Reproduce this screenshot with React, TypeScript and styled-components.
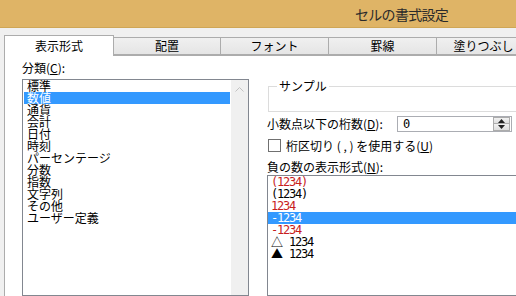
import React from 'react';
import styled, { createGlobalStyle } from 'styled-components';

const GlobalStyle = createGlobalStyle`
    html, body {
        margin: 0;
        padding: 0;
        background: #f0f0f0;
        overflow: hidden;
    }
    body {
        font-family: "Noto Sans CJK JP", "Liberation Sans", sans-serif;
        font-size: 12px;
        color: #000;
    }
`;

const Dialog = styled.div`
    width: 516px;
    height: 296px;
    overflow: hidden;
    display: flex;
    flex-direction: column;
    background: #f0f0f0;
`;

const TitleBar = styled.div`
    height: 28px;
    flex: none;
    box-sizing: border-box;
    display: flex;
    align-items: center;
    padding-left: 355px;
    background: #dfb466;
    border-bottom: 1px solid #cfa656;
    color: #2a2a2a;
    font-size: 14px;
    letter-spacing: -0.7px;
    white-space: nowrap;
`;

const TabRow = styled.div`
    height: 20px;
    flex: none;
    margin-top: 7px;
    padding-left: 4px;
    display: flex;
    align-items: flex-end;
    position: relative;
    z-index: 1;
`;

const Tab = styled.div<{ $active?: boolean; $w: number }>`
    flex: none;
    box-sizing: border-box;
    width: ${p => p.$w}px;
    height: ${p => (p.$active ? 21 : 18)}px;
    margin-bottom: ${p => (p.$active ? -1 : 0)}px;
    margin-left: -1px;
    &:first-child { margin-left: 0; }
    display: flex;
    align-items: center;
    justify-content: center;
    border: 1px solid #acacac;
    border-bottom: ${p => (p.$active ? 'none' : '1px solid #acacac')};
    background: ${p => (p.$active ? '#fff' : 'linear-gradient(#f0f0f0, #e5e5e5)')};
    line-height: 14px;
    white-space: nowrap;
    position: relative;
    z-index: ${p => (p.$active ? 2 : 1)};
`;

const Panel = styled.div`
    flex: 1;
    margin-left: 4px;
    background: #fff;
    border-top: 1px solid #acacac;
    border-left: 1px solid #acacac;
    display: flex;
    padding: 5px 0 0 17px;
    overflow: hidden;
`;

const LeftCol = styled.div`
    width: 227px;
    flex: none;
    display: flex;
    flex-direction: column;
`;

const RightCol = styled.div`
    width: 262px;
    flex: none;
    margin-left: 18px;
    display: flex;
    flex-direction: column;
`;

const Label = styled.div`
    line-height: 14px;
    height: 14px;
    white-space: nowrap;
`;

const U = styled.span`
    text-decoration: underline;
`;

const CategoryList = styled.div`
    margin-top: 4px;
    height: 230px;
    box-sizing: border-box;
    border: 1px solid #828790;
    display: flex;
`;

const Items = styled.div`
    flex: 1;
    padding: 0 1px;
`;

const Item = styled.div<{ $selected?: boolean }>`
    height: 12px;
    line-height: 12px;
    padding-left: 3px;
    white-space: nowrap;
    background: ${p => (p.$selected ? '#3399ff' : 'transparent')};
    color: ${p => (p.$selected ? '#fff' : '#000')};
`;

const ScrollTrack = styled.div`
    width: 17px;
    flex: none;
    background: #f0f0f0;
    display: flex;
    justify-content: center;
    padding-top: 7px;
    box-sizing: border-box;
`;

const Group = styled.fieldset`
    margin: 18px 0 0 1px;
    padding: 0;
    height: 35px;
    box-sizing: border-box;
    border: 1px solid #dcdcdc;
    min-width: 0;
`;

const Legend = styled.legend`
    margin-left: 8px;
    padding: 0 2px;
    line-height: 14px;
`;

const FieldRow = styled.div`
    margin-top: 4px;
    height: 16px;
    display: flex;
    align-items: center;
`;

const FieldLabel = styled.div`
    width: 130px;
    flex: none;
    white-space: nowrap;
    line-height: 14px;
`;

const SpinBox = styled.div`
    width: 115px;
    height: 16px;
    box-sizing: border-box;
    border: 1px solid #abadb3;
    display: flex;
    align-items: center;
    padding-left: 5px;
    font-family: "DejaVu Sans Mono", monospace;
    font-size: 12px;
`;

const SpinValue = styled.div`
    flex: 1;
    line-height: 14px;
`;

const SpinButtons = styled.div`
    width: 17px;
    height: 14px;
    display: flex;
    flex-direction: column;
    margin-right: 1px;
`;

const SpinButton = styled.div`
    flex: 1;
    box-sizing: border-box;
    border: 1px solid #acacac;
    background: linear-gradient(#f2f2f2, #dedede);
    display: flex;
    align-items: center;
    justify-content: center;
    & + & { border-top: none; }
`;

const CheckRow = styled.div`
    margin-top: 7px;
    display: flex;
    align-items: center;
    height: 14px;
    padding-left: 1px;
`;

const CheckBox = styled.div`
    width: 13px;
    height: 13px;
    box-sizing: border-box;
    border: 1px solid #707070;
    background: #fff;
    flex: none;
    margin-right: 5px;
`;

const NegLabel = styled(Label)`
    margin-top: 7px;
`;

const NegList = styled.div`
    margin-top: 1px;
    height: 130px;
    box-sizing: border-box;
    border: 1px solid #828790;
    border-right: none;
`;

const NegItem = styled.div<{ $selected?: boolean; $red?: boolean }>`
    height: 12px;
    line-height: 12px;
    padding-left: 3px;
    white-space: pre;
    font-family: "DejaVu Sans Mono", monospace;
    font-size: 12px;
    letter-spacing: -1.2px;
    background: ${p => (p.$selected ? '#3399ff' : 'transparent')};
    color: ${p => (p.$selected ? '#fff' : p.$red ? '#c81e1e' : '#000')};
`;

const Tri = styled.span`
    display: inline-block;
    width: 12px;
    height: 12px;
    line-height: 12px;
    vertical-align: top;
    font-family: "Noto Sans CJK JP", sans-serif;
    font-size: 12px;
    letter-spacing: 0;
    margin-right: 6px;
`;

const tabs = [
    { label: '表示形式', w: 110, active: true },
    { label: '配置', w: 108 },
    { label: 'フォント', w: 109 },
    { label: '罫線', w: 109 },
    { label: '塗りつぶし', w: 95 },
];

const categories = ['標準', '数値', '通貨', '会計', '日付', '時刻', 'パーセンテージ', '分数', '指数', '文字列', 'その他', 'ユーザー定義'];

const negatives: { text: string; red?: boolean; tri?: string }[] = [
    { text: '(1234)', red: true },
    { text: '(1234)' },
    { text: '1234', red: true },
    { text: '-1234' },
    { text: '-1234', red: true },
    { text: '1234', tri: '△' },
    { text: '1234', tri: '▲' },
];

const Arrow = ({ up, color }: { up?: boolean; color: string }) => (
    <svg width="7" height="4" viewBox="0 0 7 4">
        <path d={up ? 'M0 4 L3.5 0 L7 4 Z' : 'M0 0 L3.5 4 L7 0 Z'} fill={color} />
    </svg>
);

const App = () => {
    return (
        <Dialog>
            <GlobalStyle />
            <TitleBar>セルの書式設定</TitleBar>
            <TabRow>
                {tabs.map(t => (
                    <Tab key={t.label} $active={t.active} $w={t.w}>{t.label}</Tab>
                ))}
            </TabRow>
            <Panel>
                <LeftCol>
                    <Label>分類(<U>C</U>):</Label>
                    <CategoryList>
                        <Items>
                            {categories.map((c, i) => (
                                <Item key={c} $selected={i === 1}>{c}</Item>
                            ))}
                        </Items>
                        <ScrollTrack>
                            <svg width="9" height="5" viewBox="0 0 9 5">
                                <path d="M0.5 4.5 L4.5 0.5 L8.5 4.5" fill="none" stroke="#c2c2c2" strokeWidth="1" />
                            </svg>
                        </ScrollTrack>
                    </CategoryList>
                </LeftCol>
                <RightCol>
                    <Group>
                        <Legend>サンプル</Legend>
                    </Group>
                    <FieldRow>
                        <FieldLabel>小数点以下の桁数(<U>D</U>):</FieldLabel>
                        <SpinBox>
                            <SpinValue>0</SpinValue>
                            <SpinButtons>
                                <SpinButton><Arrow up color="#222" /></SpinButton>
                                <SpinButton><Arrow color="#222" /></SpinButton>
                            </SpinButtons>
                        </SpinBox>
                    </FieldRow>
                    <CheckRow>
                        <CheckBox />
                        <Label>桁区切り ( , ) を使用する(<U>U</U>)</Label>
                    </CheckRow>
                    <NegLabel>負の数の表示形式(<U>N</U>):</NegLabel>
                    <NegList>
                        {negatives.map((n, i) => (
                            <NegItem key={i} $selected={i === 3} $red={n.red}>
                                {n.tri && <Tri>{n.tri}</Tri>}
                                {n.text}
                            </NegItem>
                        ))}
                    </NegList>
                </RightCol>
            </Panel>
        </Dialog>
    );
};

export default App;
